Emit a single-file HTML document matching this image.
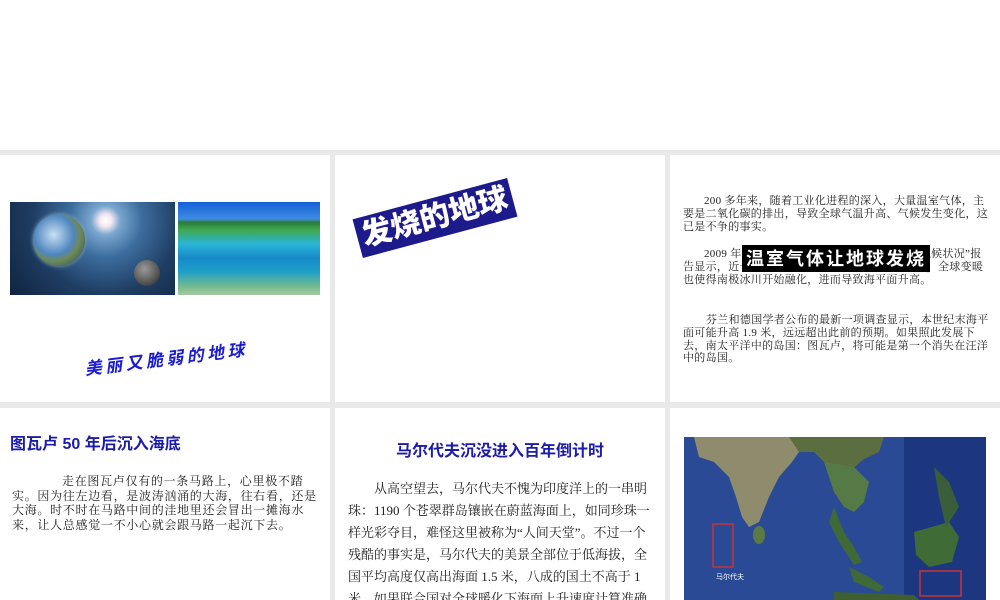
<!DOCTYPE html>
<html><head><meta charset="utf-8"><style>
*{margin:0;padding:0;box-sizing:border-box}
body{width:1000px;height:600px;background:#e9e9e9;position:relative;overflow:hidden;font-family:"Liberation Serif","Noto Serif CJK SC",serif}
.p{position:absolute;background:#fff;overflow:hidden}
.t{position:absolute;font-size:11px;letter-spacing:0.3px;line-height:12.8px;color:#222;font-family:"Liberation Serif","Noto Serif CJK SC",serif}
.h{position:absolute;font-family:"Liberation Sans","Noto Sans CJK SC",sans-serif;font-weight:bold;color:#1c1ca8}
</style></head><body>
<div class="p" style="left:0;top:0;width:1000px;height:150px"></div>

<div class="p" style="left:0;top:155px;width:330px;height:247px">
 <div style="position:absolute;left:10px;top:47px;width:165px;height:93px;background:radial-gradient(circle at 58% 20%,#fff 0,#f4e8f0 5%,#7aa6cf 12%,#3d6d9e 30%,#1f3d63 60%,#0f2440 100%)">
  <div style="position:absolute;left:23px;top:12px;width:52px;height:52px;border-radius:50%;background:radial-gradient(circle at 40% 40%,#c8dff2,#4f86c0 45%,#6e8a55 60%,#1b3a6e 100%);box-shadow:0 0 4px #8ab"></div>
  <div style="position:absolute;left:124px;top:58px;width:26px;height:26px;border-radius:50%;background:radial-gradient(circle at 40% 35%,#999,#555 60%,#222)"></div>
 </div>
 <div style="position:absolute;left:178px;top:47px;width:142px;height:93px;background:linear-gradient(180deg,#1560d8 0,#3d8ce0 18%,#2a7d3a 22%,#3fa850 30%,#2ab5d8 45%,#168ac8 60%,#1f9fc7 75%,#6fb98f 90%,#a7c9a0 100%)"></div>
 <div style="position:absolute;left:84px;top:190px;font-family:'WenQuanYi Zen Hei','Noto Sans CJK SC',sans-serif;font-weight:bold;font-style:italic;font-size:17px;color:#1b1bd0;transform:rotate(-7deg);letter-spacing:3.5px">美丽又脆弱的地球</div>
</div>

<div class="p" style="left:335px;top:155px;width:330px;height:247px">
 <div style="position:absolute;left:20px;top:43px;width:160px;height:40px;background:#1d1a8c;transform:rotate(-15deg);transform-origin:center;color:#fff;font-family:'Liberation Sans','Noto Sans CJK SC',sans-serif;font-weight:900;font-size:30px;line-height:40px;text-align:center">发烧的地球</div>
</div>

<div class="p" style="left:670px;top:155px;width:330px;height:247px">
 <div class="t" style="left:13px;top:40px;width:306px;text-indent:21px">200 多年来，随着工业化进程的深入，大量温室气体，主要是二氧化碳的排出，导致全球气温升高、气候发生变化，这已是不争的事实。</div>
 <div class="t" style="left:13px;top:93px;width:306px;text-indent:21px">2009 年，世界气象组织发布的“2009 年全球气候状况”报告显示，近十年是有记录以来最热的 10 年。此外，全球变暖也使得南极冰川开始融化，进而导致海平面升高。</div>
 <div class="t" style="left:13px;top:159px;width:306px;text-indent:23px">芬兰和德国学者公布的最新一项调查显示，本世纪末海平面可能升高 1.9 米，远远超出此前的预期。如果照此发展下去，南太平洋中的岛国：图瓦卢，将可能是第一个消失在汪洋中的岛国。</div>
 <div style="position:absolute;left:72px;top:90px;width:188px;height:27px;background:#000;color:#fff;font-family:'WenQuanYi Zen Hei','Noto Sans CJK SC',sans-serif;font-weight:bold;font-size:18px;line-height:27px;text-align:center;letter-spacing:2px">温室气体让地球发烧</div>
</div>

<div class="p" style="left:0;top:408px;width:330px;height:192px">
 <div class="h" style="left:10px;top:22px;font-size:16px">图瓦卢 50 年后沉入海底</div>
 <div class="t" style="left:12px;top:66px;width:312px;font-size:12px;line-height:14.5px;letter-spacing:0.7px;text-indent:50px">走在图瓦卢仅有的一条马路上，心里极不踏实。因为往左边看，是波涛汹涌的大海，往右看，还是大海。时不时在马路中间的洼地里还会冒出一摊海水来，让人总感觉一不小心就会跟马路一起沉下去。</div>
</div>

<div class="p" style="left:335px;top:408px;width:330px;height:192px">
 <div class="h" style="left:0;width:330px;text-align:center;top:29px;font-size:16px">马尔代夫沉没进入百年倒计时</div>
 <div class="t" style="left:13px;top:70px;width:305px;font-size:13px;letter-spacing:0;line-height:22px;text-indent:26px">从高空望去，马尔代夫不愧为印度洋上的一串明珠：1190 个苍翠群岛镶嵌在蔚蓝海面上，如同珍珠一样光彩夺目，难怪这里被称为“人间天堂”。不过一个残酷的事实是，马尔代夫的美景全部位于低海拔，全国平均高度仅高出海面 1.5 米，八成的国土不高于 1 米。如果联合国对全球暖化下海面上升速度计算准确的话，最快一个世纪这些岛屿将被海水逐一吞噬。</div>
</div>

<div class="p" style="left:670px;top:408px;width:330px;height:192px">
 <svg style="position:absolute;left:14px;top:29px" width="302" height="163" viewBox="0 0 302 163">
  <rect width="302" height="163" fill="#2a4a96"/>
  <rect x="220" y="0" width="82" height="163" fill="#1d3680"/>
  <path d="M10 0 L110 0 L115 15 L108 25 L95 40 L85 60 L75 85 L65 90 L58 80 L52 60 L45 40 L30 25 L15 20 Z" fill="#8e8c6c"/>
  <path d="M105 0 L200 0 L195 15 L180 22 L165 35 L150 38 L140 25 L130 15 L115 15 Z" fill="#5a6e40"/>
  <path d="M140 25 L170 30 L185 45 L180 65 L170 75 L160 70 L150 55 L145 40 Z" fill="#557a45"/>
  <path d="M150 70 L160 95 L170 110 L178 125 L170 128 L155 105 L145 85 Z" fill="#3f6a38"/>
  <path d="M165 130 L185 140 L200 150 L195 155 L170 145 Z" fill="#3f6a38"/>
  <path d="M230 95 L265 85 L275 100 L268 125 L245 130 L232 118 Z" fill="#3e6b36"/>
  <path d="M150 155 L230 158 L235 163 L150 163 Z" fill="#3e6030"/>
  <path d="M250 30 L265 45 L275 70 L262 90 L255 60 Z" fill="#3b5e3a"/>
  <ellipse cx="75" cy="98" rx="6" ry="9" fill="#5d7a45"/>
  <rect x="29" y="87" width="20" height="43" fill="none" stroke="#c8323c" stroke-width="1.5"/>
  <rect x="236" y="134" width="41" height="25" fill="none" stroke="#c8323c" stroke-width="1.5"/>
  <text x="32" y="142" fill="#fff" font-size="7" font-family="Noto Sans CJK SC,sans-serif">马尔代夫</text>
 </svg>
</div>
</body></html>
